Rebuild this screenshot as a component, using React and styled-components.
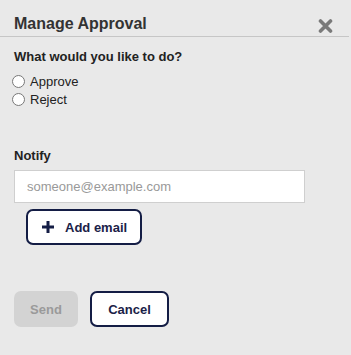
import styled, { createGlobalStyle } from 'styled-components';

const GlobalStyle = createGlobalStyle`
  html, body {
    margin: 0;
    padding: 0;
    background: #e9e9e9;
    font-family: 'Liberation Sans', Arial, sans-serif;
  }
  * {
    box-sizing: border-box;
  }
`;

const Panel = styled.div`
  width: 351px;
  height: 355px;
  background: #e9e9e9;
  color: #222;
`;

const Header = styled.div`
  height: 37px;
  margin-right: 2px;
  padding: 0 16px 0 14px;
  display: flex;
  justify-content: space-between;
  align-items: flex-start;
  border-bottom: 1px solid #c6c6c6;
`;

const Title = styled.div`
  padding-top: 14px;
  font-size: 16px;
  line-height: 20px;
  font-weight: 700;
  color: #333;
`;

const CloseButton = styled.button`
  margin-top: 18px;
  padding: 0;
  border: none;
  background: none;
  width: 16px;
  height: 15px;
  display: flex;
  align-items: center;
  justify-content: center;
  cursor: pointer;
`;

const Body = styled.div`
  padding: 0 14px;
`;

const Label = styled.div`
  margin-top: ${(p) => p.$top}px;
  font-size: 13px;
  line-height: 15px;
  font-weight: 700;
  color: #222;
`;

const RadioGroup = styled.div`
  margin-top: 8px;
  display: flex;
  flex-direction: column;
`;

const RadioRow = styled.label`
  height: 18px;
  display: flex;
  align-items: center;
  font-size: 13px;
  color: #222;
  input {
    width: 13px;
    height: 13px;
    margin: 0 5px 0 -2px;
  }
`;

const EmailInput = styled.input`
  display: block;
  margin-top: 7px;
  width: 291px;
  height: 33px;
  padding: 0 12px;
  border: 1px solid #cfcfcf;
  background: #fff;
  font-family: inherit;
  font-size: 13px;
  color: #333;
  outline: none;
  &::placeholder {
    color: #999;
  }
`;

const OutlineButton = styled.button`
  height: 36px;
  padding: 0 ${(p) => p.$pad}px;
  border: 2px solid #141d45;
  border-radius: 7px;
  background: #fff;
  color: #1a2147;
  font-family: inherit;
  font-size: 13px;
  font-weight: 700;
  white-space: nowrap;
  display: flex;
  align-items: center;
  gap: 11px;
  cursor: pointer;
`;

const AddButton = styled(OutlineButton)`
  margin: 6px 0 0 12px;
  width: 116px;
`;

const Footer = styled.div`
  margin-top: 46px;
  display: flex;
  gap: 12px;
`;

const SendButton = styled.button`
  width: 64px;
  height: 36px;
  border: none;
  border-radius: 7px;
  background: #d3d3d3;
  color: #9a9a9a;
  font-family: inherit;
  font-size: 13px;
  font-weight: 700;
`;

const CancelButton = styled(OutlineButton)`
  width: 79px;
  justify-content: center;
`;

const App = () => {
  return (
    <Panel>
      <GlobalStyle />
      <Header>
        <Title>Manage Approval</Title>
        <CloseButton aria-label='close'>
          <svg width='15' height='14' viewBox='0 0 15 14'>
            <path d='M2.5 2 L12.5 12 M12.5 2 L2.5 12' stroke='#7a7a7a' strokeWidth='3.6' strokeLinecap='round' />
          </svg>
        </CloseButton>
      </Header>
      <Body>
        <Label $top={12}>What would you like to do?</Label>
        <RadioGroup>
          <RadioRow>
            <input type='radio' name='action' />
            Approve
          </RadioRow>
          <RadioRow>
            <input type='radio' name='action' />
            Reject
          </RadioRow>
        </RadioGroup>
        <Label $top={40}>Notify</Label>
        <EmailInput placeholder='someone@example.com' />
        <AddButton $pad={14}>
          <svg width='12' height='12' viewBox='0 0 12 12' style={{ flexShrink: 0 }}>
            <path d='M6 0 V12 M0 6 H12' stroke='#141d45' strokeWidth='3' />
          </svg>
          Add email
        </AddButton>
        <Footer>
          <SendButton disabled>Send</SendButton>
          <CancelButton $pad={0}>Cancel</CancelButton>
        </Footer>
      </Body>
    </Panel>
  );
};

export default App;
